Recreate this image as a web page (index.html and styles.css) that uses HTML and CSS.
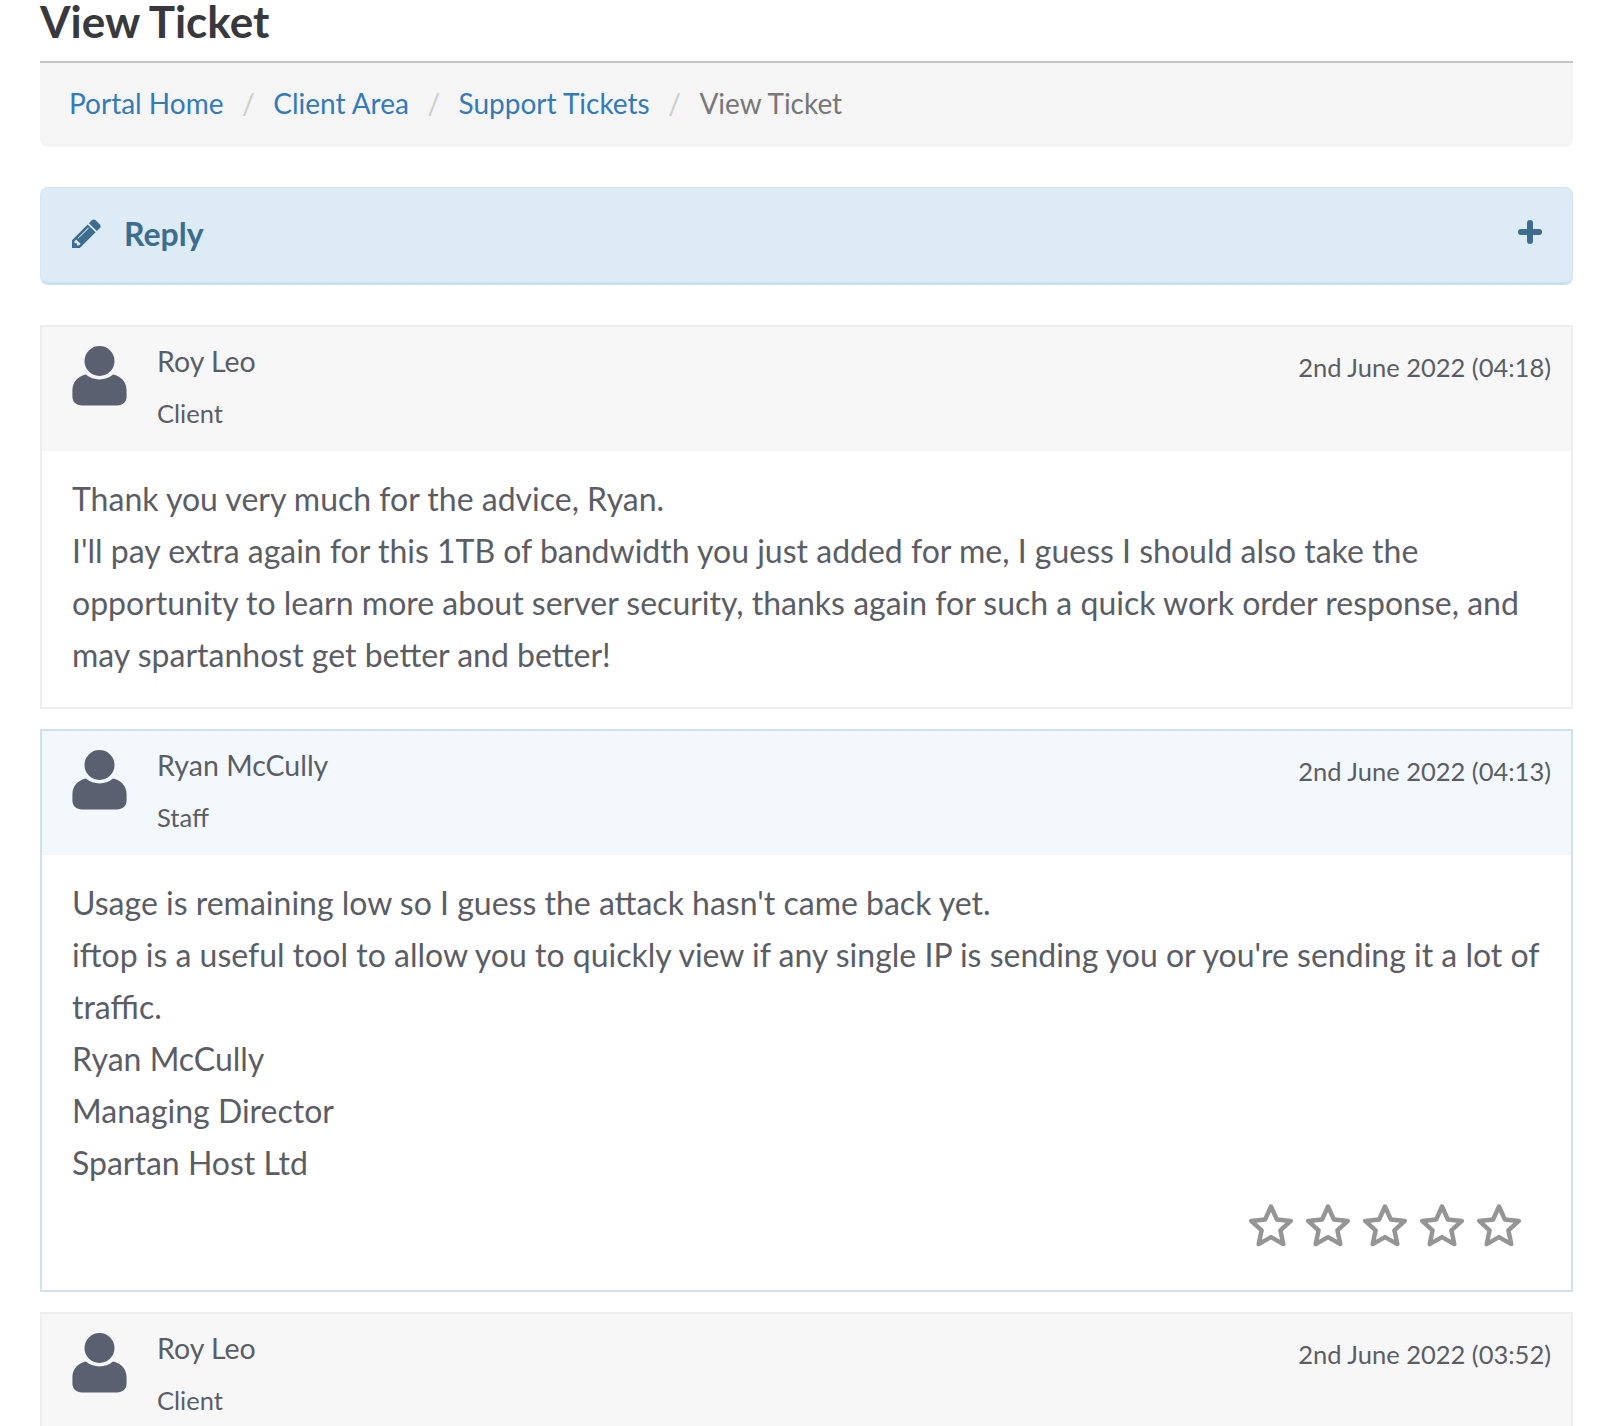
FILE: index.html
```html
<!DOCTYPE html>
<html lang="en">
<head>
    <meta charset="UTF-8">
    <meta name="viewport" content="width=device-width, initial-scale=1.0">
    <title>View Ticket</title>
    <link rel="stylesheet" href="styles.css">
</head>
<body>
    <svg class="icon-defs" width="0" height="0">
        <symbol id="user" viewBox="0 0 56 62">
            <circle cx="28" cy="15.5" r="15.5"/>
            <path d="M14 29.5C18 33 23 34.5 28 34.5S38 33 42 29.5C50 31 56 37 56 46V52C56 58 52 61.5 46 61.5H10C4 61.5 0 58 0 52V46C0 37 6 31 14 29.5Z"/>
        </symbol>
        <symbol id="star" viewBox="0 0 46 44">
            <path d="M23 3.5L28.8 16.4L42.8 17.9L32.4 27.3L35.3 41.1L23 34.1L10.7 41.1L13.6 27.3L3.2 17.9L17.2 16.4Z"/>
        </symbol>
    </svg>

    <div class="page">
        <h1 class="page-title">View Ticket</h1>

        <ol class="breadcrumb">
            <li><a href="#">Portal Home</a></li>
            <li><a href="#">Client Area</a></li>
            <li><a href="#">Support Tickets</a></li>
            <li class="current">View Ticket</li>
        </ol>

        <div class="reply-bar">
            <svg class="pencil" viewBox="128 128 1536 1536">
                <path d="M491 1536l91-91-235-235-91 91v107h128v128h107zm523-928q0-22-22-22-10 0-17 7l-542 542q-7 7-7 17 0 22 22 22 10 0 17-7l542-542q7-7 7-17zm-54-192l416 416-832 832h-416v-416zm683 96q0 53-37 90l-166 166-416-416 166-165q36-38 90-38 53 0 91 38l235 234q37 39 37 91z"/>
            </svg>
            <span class="reply-label">Reply</span>
            <svg class="plus" viewBox="0 0 24 24">
                <path d="M12 3v18M3 12h18"/>
            </svg>
        </div>

        <div class="reply">
            <div class="reply-head">
                <svg class="avatar"><use href="#user"/></svg>
                <div class="who">
                    <div class="name">Roy Leo</div>
                    <div class="role">Client</div>
                </div>
                <div class="date">2nd June 2022 (04:18)</div>
            </div>
            <div class="reply-body">
                <p>Thank you very much for the advice, Ryan.</p>
                <p>I'll pay extra again for this 1TB of bandwidth you just added for me, I guess I should also take the opportunity to learn more about server security, thanks again for such a quick work order response, and may spartanhost get better and better!</p>
            </div>
        </div>

        <div class="reply staff">
            <div class="reply-head">
                <svg class="avatar"><use href="#user"/></svg>
                <div class="who">
                    <div class="name">Ryan McCully</div>
                    <div class="role">Staff</div>
                </div>
                <div class="date">2nd June 2022 (04:13)</div>
            </div>
            <div class="reply-body">
                <p>Usage is remaining low so I guess the attack hasn't came back yet.</p>
                <p>iftop is a useful tool to allow you to quickly view if any single IP is sending you or you're sending it a lot of traffic.</p>
                <p>Ryan McCully</p>
                <p>Managing Director</p>
                <p>Spartan Host Ltd</p>
                <div class="rating">
                    <svg class="star"><use href="#star"/></svg>
                    <svg class="star"><use href="#star"/></svg>
                    <svg class="star"><use href="#star"/></svg>
                    <svg class="star"><use href="#star"/></svg>
                    <svg class="star"><use href="#star"/></svg>
                </div>
            </div>
        </div>

        <div class="reply">
            <div class="reply-head">
                <svg class="avatar"><use href="#user"/></svg>
                <div class="who">
                    <div class="name">Roy Leo</div>
                    <div class="role">Client</div>
                </div>
                <div class="date">2nd June 2022 (03:52)</div>
            </div>
        </div>
    </div>
</body>
</html>
```

FILE: styles.css
```css
* {
    margin: 0;
    padding: 0;
    box-sizing: border-box;
}

html, body {
    height: 1426px;
    overflow: hidden;
}

body {
    background: #fff;
    color: #5b5d65;
    font-family: "Lato", "Open Sans", sans-serif;
}

.icon-defs {
    position: absolute;
}

.page {
    padding: 0 39px 0 40px;
}

.page-title {
    height: 61px;
    font-size: 44px;
    line-height: 42px;
    font-weight: 700;
    color: #37393d;
}

.breadcrumb {
    display: flex;
    align-items: center;
    height: 86px;
    padding: 0 29px 4px;
    list-style: none;
    font-size: 28px;
    background: #f5f5f5;
    border-top: 2px solid #c4c4c4;
    border-radius: 0 0 8px 8px;
}

.breadcrumb li + li::before {
    content: "/";
    color: #ccc;
    padding: 0 18.5px;
}

.breadcrumb a {
    color: #337ab7;
    text-decoration: none;
}

.breadcrumb .current {
    color: #777;
}

.reply-bar {
    display: flex;
    align-items: center;
    height: 98px;
    margin-top: 40px;
    padding: 0 30px 4px 31px;
    background: #dcebf6;
    border: 1px solid #d3e6f1;
    border-bottom: 3px solid #c9e2ee;
    border-radius: 8px;
    color: #3c6d8f;
}

.pencil {
    width: 29px;
    height: 29px;
    fill: #3c6d8f;
}

.reply-label {
    margin-left: 23px;
    font-size: 32px;
    font-weight: 700;
}

.plus {
    width: 24px;
    height: 24px;
    margin: -2px 0 0 auto;
    fill: none;
    stroke: #3c6d8f;
    stroke-width: 6;
    stroke-linecap: round;
}

.reply {
    margin-top: 20px;
    border: 2px solid #eee;
}

.reply-bar + .reply {
    margin-top: 40px;
}

.reply.staff {
    border-color: #cfe0ee;
}

.reply-head {
    display: flex;
    align-items: flex-start;
    height: 124px;
    padding: 19px 20px 0 30px;
    background: #f7f7f8;
}

.staff .reply-head {
    background: #f3f8fd;
}

.avatar {
    width: 55px;
    height: 60px;
    fill: #5a6070;
}

.who {
    margin-left: 30px;
    margin-top: -4px;
}

.name {
    font-size: 28.5px;
    line-height: 38px;
}

.role {
    margin-top: 14px;
    font-size: 25.5px;
    line-height: 38px;
}

.date {
    margin-left: auto;
    margin-top: 3px;
    font-size: 25.5px;
    line-height: 36px;
}

.reply-body {
    padding: 22px 30px 26px;
    font-size: 32px;
    line-height: 52px;
}

.rating {
    display: flex;
    justify-content: flex-end;
    gap: 11px;
    margin-top: 14px;
    padding-right: 19px;
    height: 61px;
}

.star {
    width: 46px;
    height: 44px;
    fill: none;
    stroke: #959595;
    stroke-width: 4.5;
    stroke-linejoin: round;
}
```
